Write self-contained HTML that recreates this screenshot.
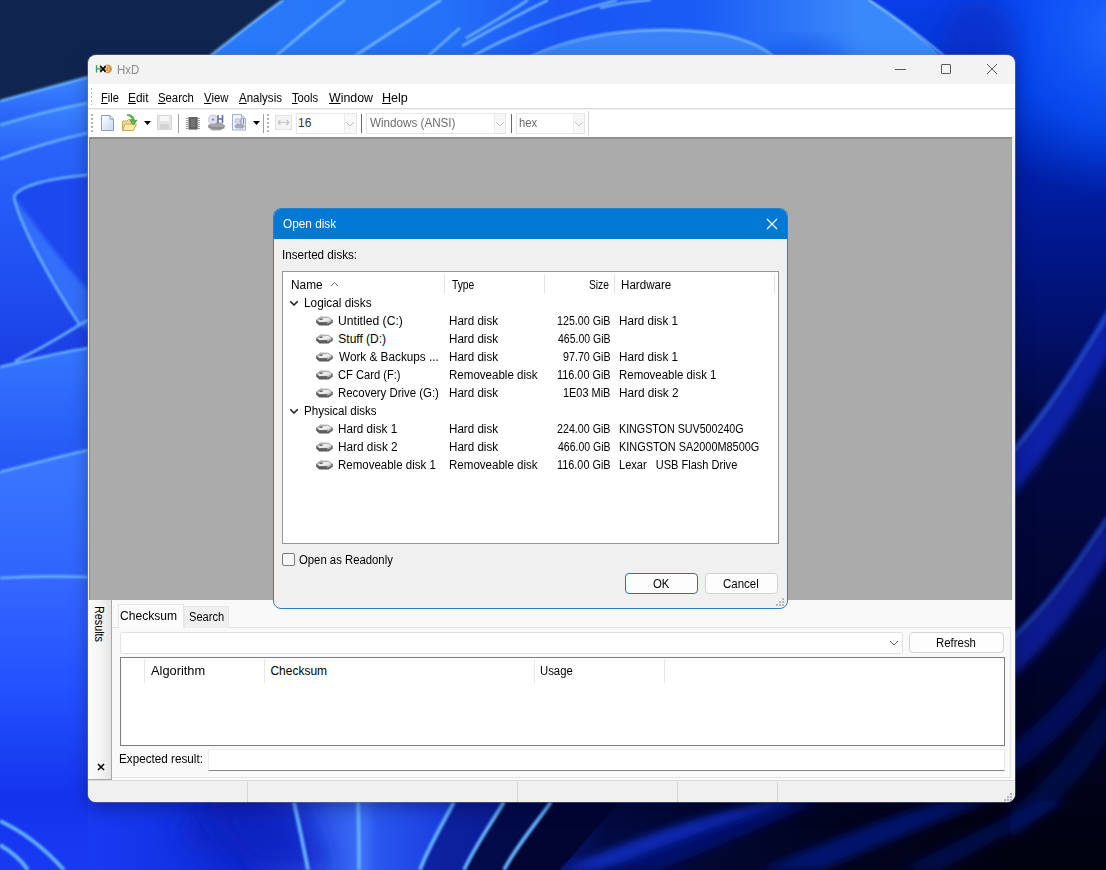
<!DOCTYPE html>
<html><head><meta charset="utf-8">
<style>
*{box-sizing:border-box;margin:0;padding:0}
html,body{width:1106px;height:870px;overflow:hidden}
body{position:relative;font-family:"Liberation Sans",sans-serif;font-size:12px;color:#000;background:#1a3fd0}
.a{position:absolute}
.t{position:absolute;white-space:nowrap;line-height:14px;font-size:12px}
.u{text-decoration:underline;text-decoration-thickness:1px;text-underline-offset:1px}
</style></head><body>
<svg width="0" height="0" style="position:absolute"><defs>
<linearGradient id="hg" x1="0" y1="0" x2="1" y2="1"><stop offset="0" stop-color="#b8b8b8"/><stop offset=".5" stop-color="#f0f0f0"/><stop offset="1" stop-color="#c0c0c0"/></linearGradient>
<symbol id="hdd" viewBox="0 0 17 10"><path d="M0.5 4.2 L4.5 1 L12.5 1.3 L16.5 4.3 L12.5 6.6 L3.5 6.6 Z" fill="url(#hg)" stroke="#7a7a7a" stroke-width=".7"/><path d="M0.5 4.2 L3.5 6.6 H12.5 L16.5 4.3 V6.6 L12.5 9.2 H3.5 L0.5 6.8 Z" fill="#5e5e5e" stroke="#555" stroke-width=".5"/><rect x="3.5" y="2.4" width="3" height="1.6" fill="#6a6a6a"/><path d="M11 7.3 L15.5 5.4" stroke="#c8c8c8" stroke-width=".9"/></symbol>
</defs></svg>
<svg class="a" style="left:0;top:0" width="1106" height="870" viewBox="0 0 1106 870">
<defs>
 <filter id="b1" x="-20%" y="-20%" width="140%" height="140%"><feGaussianBlur stdDeviation="0.9"/></filter>
 <filter id="b2" x="-20%" y="-20%" width="140%" height="140%"><feGaussianBlur stdDeviation="2"/></filter>
 <filter id="b3" x="-30%" y="-30%" width="160%" height="160%"><feGaussianBlur stdDeviation="4"/></filter>
 <filter id="b8" x="-50%" y="-50%" width="200%" height="200%"><feGaussianBlur stdDeviation="12"/></filter>
 <linearGradient id="gright" x1="0" y1="0" x2="0" y2="870" gradientUnits="userSpaceOnUse">
  <stop offset="0" stop-color="#0a3ee8"/><stop offset=".1" stop-color="#0034d0"/><stop offset=".2" stop-color="#0020a8"/><stop offset=".27" stop-color="#001890"/><stop offset=".38" stop-color="#02106a"/><stop offset=".48" stop-color="#020a44"/><stop offset=".7" stop-color="#010530"/><stop offset="1" stop-color="#00020e"/>
 </linearGradient>
 <radialGradient id="grtop" cx="1120" cy="30" r="170" gradientUnits="userSpaceOnUse">
  <stop offset="0" stop-color="#2068ff" stop-opacity="1"/><stop offset=".6" stop-color="#0a50f8" stop-opacity=".7"/><stop offset="1" stop-color="#0040e0" stop-opacity="0"/>
 </radialGradient>
 <linearGradient id="gleft" x1="0" y1="0" x2="0" y2="870" gradientUnits="userSpaceOnUse">
  <stop offset="0" stop-color="#2e6cf8"/><stop offset=".45" stop-color="#2c68fa"/><stop offset=".6" stop-color="#3468ff"/><stop offset=".72" stop-color="#2050ff"/><stop offset=".9" stop-color="#1a40f5"/><stop offset="1" stop-color="#1a3ff0"/>
 </linearGradient>
 <linearGradient id="gbot" x1="0" y1="0" x2="1106" y2="0" gradientUnits="userSpaceOnUse">
  <stop offset="0" stop-color="#183af2"/><stop offset=".08" stop-color="#183af2"/><stop offset=".16" stop-color="#1232e4"/><stop offset=".22" stop-color="#1028d0"/><stop offset=".26" stop-color="#2040e0"/><stop offset=".33" stop-color="#3a6ef8"/><stop offset=".34" stop-color="#2a58f0"/><stop offset=".4" stop-color="#1a3ee0"/><stop offset=".47" stop-color="#0a1e9a"/><stop offset=".55" stop-color="#020a40"/><stop offset=".75" stop-color="#010420"/><stop offset="1" stop-color="#00010a"/>
 </linearGradient>
 <linearGradient id="gpet" x1="205" y1="0" x2="944" y2="0" gradientUnits="userSpaceOnUse">
  <stop offset="0" stop-color="#2a7cfa"/><stop offset=".33" stop-color="#2470f8"/><stop offset=".48" stop-color="#1a56f4"/><stop offset=".67" stop-color="#1a5cf5"/><stop offset=".88" stop-color="#3a88fa"/><stop offset="1" stop-color="#3a8afa"/>
 </linearGradient>
 <linearGradient id="gtr" x1="944" y1="0" x2="1106" y2="0" gradientUnits="userSpaceOnUse">
  <stop offset="0" stop-color="#0828b8"/><stop offset=".35" stop-color="#0a3ad8"/><stop offset=".7" stop-color="#0c58ff"/><stop offset="1" stop-color="#2068ff"/>
 </linearGradient>
</defs>
<rect width="1106" height="870" fill="url(#gleft)"/>
<!-- bottom band -->
<rect x="88" y="801" width="1018" height="69" fill="url(#gbot)"/>
<ellipse cx="230" cy="830" rx="50" ry="25" fill="#0a20b8" filter="url(#b8)" opacity=".6"/>
<!-- right band -->
<path d="M860 0 L1106 0 L1106 870 L1005 870 L1005 60 L940 60 Z" fill="url(#gright)"/>
<rect x="940" y="0" width="166" height="280" fill="url(#grtop)"/>
<ellipse cx="980" cy="45" rx="40" ry="45" fill="#0a2cc0" filter="url(#b8)" opacity=".6"/>
<!-- top right deep blue -->

<!-- top bright petal -->
<path d="M283 0 L870 0 C900 20 925 40 944 60 L205 60 C240 30 262 15 283 0 Z" fill="url(#gpet)"/>
<path d="M345 0 L441 0 C410 20 385 36 355 60 L276 60 C300 36 320 18 345 0 Z" fill="#2a7af8" opacity=".6"/>
<ellipse cx="805" cy="56" rx="40" ry="12" fill="#1048e8" filter="url(#b8)" opacity=".6"/>
<path d="M528 60 C580 32 650 24 720 34 C750 40 765 48 775 60 Z" fill="#3a82f8"/>

<!-- top navy -->
<path d="M0 0 L283 0 C262 15 238 34 205 60 L88 77 L0 101 Z" fill="#0f2550"/>
<!-- highlight lines top -->
<g fill="none" stroke="#84c4ff" stroke-width="2.2" filter="url(#b1)" opacity=".9">
 <path d="M283 0 C262 15 238 34 210 56"/>
 <path d="M345 0 C320 18 300 36 276 56"/>
 <path d="M441 0 C410 20 385 36 355 56"/>
 <path d="M466 38 C490 24 510 12 528 0"/>
 <path d="M462 46 C490 30 520 14 548 0"/>
 <path d="M473 56 C520 30 570 12 617 0"/>
 <path d="M528 58 C580 32 650 24 720 34 C750 40 765 48 775 58"/>
 <path d="M600 8 C615 4 635 1 651 0"/>
 <path d="M869 0 C900 20 925 40 944 56"/>
 <path d="M460 28 C450 36 440 46 428 56"/>
</g>
<!-- left band -->
<linearGradient id="lp1" x1="0" y1="0" x2="0" y2="1"><stop offset="0" stop-color="#3c84ff"/><stop offset="1" stop-color="#2660f6"/></linearGradient>
<linearGradient id="lp4" x1="0" y1="0" x2="0" y2="1"><stop offset="0" stop-color="#2a66fa"/><stop offset=".6" stop-color="#2050f2"/><stop offset="1" stop-color="#1a3ee4"/></linearGradient>
<linearGradient id="lp5" x1="0" y1="0" x2="0" y2="1"><stop offset="0" stop-color="#3476ff"/><stop offset="1" stop-color="#2456f4"/></linearGradient>
<linearGradient id="lp6" x1="0" y1="0" x2="0" y2="1"><stop offset="0" stop-color="#3a78ff"/><stop offset="1" stop-color="#3064fc"/></linearGradient>
<linearGradient id="lp7" x1="0" y1="0" x2="0" y2="1"><stop offset="0" stop-color="#3468ff"/><stop offset=".4" stop-color="#2250ff"/><stop offset=".75" stop-color="#1434ec"/><stop offset="1" stop-color="#183af2"/></linearGradient>
<path d="M0 101 L88 77 L88 103 C60 108 30 116 0 125 Z" fill="url(#lp1)"/>
<path d="M0 125 C30 116 60 108 88 103 L88 133 C60 139 30 148 0 159 Z" fill="url(#lp1)"/>
<path d="M0 159 C30 148 60 139 88 133 L88 348 C60 352 30 360 0 367 Z" fill="url(#lp4)"/>
<path d="M88 175 C50 178 18 186 14 197 C20 225 50 280 80 325 L88 330 Z" fill="#1c48f0"/>
<path d="M14 197 C20 225 50 280 80 325 L88 330 L88 290 C60 260 35 225 14 197 Z" fill="#3a7cff" opacity=".75" filter="url(#b2)"/>
<path d="M0 367 C30 360 60 352 88 348 L88 450 C60 456 30 465 0 472 Z" fill="url(#lp5)"/>
<path d="M0 472 C30 465 60 456 88 450 L88 577 C60 576 30 576 0 578 Z" fill="url(#lp6)"/>
<path d="M0 578 C30 576 60 576 88 577 L88 870 L0 870 Z" fill="url(#lp7)"/>
<g fill="none" stroke="#6cb4ff" stroke-width="2.6" filter="url(#b1)" opacity=".95">
 <path d="M0 101 L88 77"/>
 <path d="M0 125 C30 116 60 108 88 103"/>
 <path d="M0 159 C30 148 60 139 88 133"/>
 <path d="M88 175 C50 178 18 186 14 197 C20 225 50 280 80 325"/>
 <path d="M88 320 C70 330 50 345 15 361"/>
 <path d="M0 367 C30 360 60 352 88 348"/>
 <path d="M0 472 C30 465 60 456 88 450"/>
 <path d="M0 578 C30 576 60 576 88 577"/>
</g>
<!-- bottom band details -->
<path d="M200 801 L300 801 L330 870 L250 870 Z" fill="#0a22c0" filter="url(#b8)" opacity=".8"/>
<path d="M455 801 L505 801 C490 825 474 848 464 870 L420 870 C428 848 442 825 455 801 Z" fill="#0a1a90" opacity=".8"/>
<path d="M505 801 L552 801 C535 825 515 848 504 870 L464 870 C474 848 490 825 505 801 Z" fill="#020a48"/>
<path d="M552 801 L620 801 L560 870 L504 870 C515 848 535 825 552 801 Z" fill="#010530"/>
<g fill="none" stroke="#62b0ff" stroke-width="3.8" filter="url(#b1)">
 <path d="M0 821 C24 832 46 850 64 870"/>
 <path d="M0 845 C12 852 22 861 28 870"/>
 <path d="M294 802 C299 825 304 848 308 870"/>
 <path d="M358 802 C359 825 359 848 359 870"/>
 <path d="M454 802 C442 825 428 848 420 870"/>
 <path d="M504 802 C490 825 474 848 464 870"/>
 <path d="M551 802 C535 825 515 848 504 870"/>
</g>
<!-- bottom ribbons -->
<g filter="url(#b3)">
 <path d="M560 870 L600 870 C680 840 740 815 800 801 L770 801 C700 815 630 840 560 870 Z" fill="#1030c8" opacity=".85"/>
 <path d="M600 870 L660 870 C720 845 780 820 820 801 L800 801 C740 815 680 840 600 870 Z" fill="#061690" opacity=".6"/>
 <path d="M760 870 L820 870 C880 845 940 820 990 801 L940 801 C880 820 820 845 760 870 Z" fill="#0a1ea0" opacity=".6"/>
 <path d="M900 870 L940 870 C990 845 1030 820 1070 801 L1040 801 C1000 820 950 845 900 870 Z" fill="#061488" opacity=".45"/>
</g>
<!-- ribbons -->
<g filter="url(#b3)">
 <path d="M1110 310 C1075 370 1045 415 1010 455 L1010 500 C1050 450 1085 400 1110 350 Z" fill="#0a28c0" opacity=".8"/>
 <path d="M1110 515 C1080 560 1050 605 1010 640 L1010 680 C1055 640 1085 595 1110 555 Z" fill="#0a24b0" opacity=".75"/>
 <path d="M1110 640 C1080 680 1050 715 1010 745 L1010 775 C1055 745 1085 710 1110 675 Z" fill="#08188a" opacity=".5"/>
 <path d="M1110 700 C1080 740 1050 780 1010 810 L1010 840 C1055 810 1085 775 1110 735 Z" fill="#061480" opacity=".4"/>
</g>
<g fill="none" stroke="#3a6cff" stroke-width="2.5" filter="url(#b2)">
 <path d="M1110 310 C1075 370 1045 415 1010 455"/>
 <path d="M1110 515 C1080 560 1050 605 1010 640" opacity=".8"/>
</g>
</svg>

<div class="a" style="left:88px;top:55px;width:927px;height:747px;border-radius:8px;background:#f3f3f3;overflow:hidden;box-shadow:0 0 0 1px rgba(120,130,150,.45),0 6px 18px rgba(0,0,40,.35)">
<svg class="a" style="left:7px;top:8px" width="18" height="12" viewBox="0 0 18 12">
 <path d="M1.5 2 V9.5 M5.5 2 V9.5 M1.5 5.8 H5.5" stroke="#3f9a62" stroke-width="1.3" fill="none"/>
 <circle cx="12.6" cy="5.8" r="4.4" fill="#d29444"/>
 <path d="M11 3 V8.6 H12.2 C14.6 8.6 14.6 3 12.2 3 Z" fill="none" stroke="#f3d69a" stroke-width="1"/>
 <path d="M5.5 3.2 L10.5 8.6 M10.5 3.2 L5.5 8.6" stroke="#000" stroke-width="1.6"/>
</svg>
<div class="t" style="left:28.95px;top:8.00px;transform:scaleX(0.9500);transform-origin:0 0;color:#8a8a8a">HxD</div>
<div class="a" style="left:807px;top:14px;width:11px;height:1px;background:#5c5c5c"></div>
<div class="a" style="left:853px;top:9px;width:10px;height:10px;border:1px solid #5c5c5c;border-radius:1px"></div>
<svg class="a" style="left:898px;top:8px" width="12" height="12" viewBox="0 0 12 12"><path d="M1 1 L11 11 M11 1 L1 11" stroke="#5c5c5c" stroke-width="1"/></svg>
<div class="a" style="left:0px;top:29px;width:927px;height:25px;background:#fff;border-bottom:1px solid #dadada"></div>
<div class="a" style="left:3px;top:33px;width:1px;height:17px;background-image:linear-gradient(#b0b0b0 50%,transparent 50%);background-size:1px 4px"></div>
<div class="t" style="left:12.58px;top:36.00px;transform:scaleX(0.9222);transform-origin:0 0"><span class="u">F</span>ile</div>
<div class="t" style="left:40.41px;top:36.00px;transform:scaleX(0.9900);transform-origin:0 0"><span class="u">E</span>dit</div>
<div class="t" style="left:70.46px;top:36.00px;transform:scaleX(0.9444);transform-origin:0 0"><span class="u">S</span>earch</div>
<div class="t" style="left:116.20px;top:36.00px;transform:scaleX(0.9462);transform-origin:0 0"><span class="u">V</span>iew</div>
<div class="t" style="left:151.10px;top:36.00px;transform:scaleX(0.9614);transform-origin:0 0"><span class="u">A</span>nalysis</div>
<div class="t" style="left:204.30px;top:36.00px;transform:scaleX(0.9286);transform-origin:0 0"><span class="u">T</span>ools</div>
<div class="t" style="left:241.00px;top:36.00px;transform:scaleX(1.0302);transform-origin:0 0"><span class="u">W</span>indow</div>
<div class="t" style="left:294.05px;top:36.00px;transform:scaleX(1.0478);transform-origin:0 0"><span class="u">H</span>elp</div>
<div class="a" style="left:0px;top:55px;width:927px;height:27px;background:#fff"></div>
<div class="a" style="left:3px;top:59px;width:2px;height:19px;background-image:linear-gradient(#b4b4b4 50%,transparent 50%);background-size:2px 4px"></div>
<svg class="a" style="left:12px;top:59px" width="16" height="18" viewBox="0 0 16 18">
 <defs><linearGradient id="gdoc" x1="0" y1="0" x2="1" y2="1"><stop offset="0" stop-color="#ffffff"/><stop offset="1" stop-color="#c4d8f0"/></linearGradient></defs>
 <path d="M1.5 1.5 H10 L13.5 5 V16.5 H1.5 Z" fill="url(#gdoc)" stroke="#8c9cc0" stroke-width="1"/>
 <path d="M10 1.5 V5 H13.5" fill="#dfe8f5" stroke="#8c9cc0" stroke-width="1"/>
</svg>
<svg class="a" style="left:33px;top:58px" width="18" height="19" viewBox="0 0 18 19">
 <path d="M1.5 8 H6 L7.5 6.5 H12 V17.5 H1.5 Z" fill="#f3dc8c" stroke="#c8a850" stroke-width="1"/>
 <path d="M1.5 17.5 L4 11 H15.5 L12.5 17.5 Z" fill="#fbe9a8" stroke="#c8a850" stroke-width="1"/>
 <path d="M6 2 C10 1 13 3 13.5 8 L16 7 L12.5 12 L9 7.5 L11.5 8 C11 4.5 9 3 6 2 Z" fill="#5cc050" stroke="#3a9a38" stroke-width=".8"/>
</svg>
<svg class="a" style="left:56px;top:66px" width="8" height="5" viewBox="0 0 8 5"><path d="M0 0 H7 L3.5 4 Z" fill="#000"/></svg>
<svg class="a" style="left:68px;top:59px" width="17" height="17" viewBox="0 0 17 17">
 <path d="M1.5 1.5 H15.5 V15.5 H1.5 Z" fill="#e4e4e4" stroke="#d4d4d4" stroke-width="1"/>
 <rect x="4" y="2" width="9" height="5" fill="#f6f6f6"/>
 <rect x="4" y="10" width="9" height="5" fill="#d2d2d2"/>
</svg>
<div class="a" style="left:90px;top:59px;width:1px;height:19px;background:#a0a0a0"></div>
<svg class="a" style="left:98px;top:62px" width="14" height="14" viewBox="0 0 14 14">
 <rect x="2.5" y="0" width="9.2" height="12.6" fill="#626262"/>
 <rect x="5" y="2" width="4" height="8" fill="#747474"/>
 <g fill="#9a9a9a"><rect x="0" y="1" width="2" height="1"/><rect x="0" y="3" width="2" height="1"/><rect x="0" y="5" width="2" height="1"/><rect x="0" y="7" width="2" height="1"/><rect x="0" y="9" width="2" height="1"/><rect x="0" y="11" width="2" height="1"/>
 <rect x="12" y="1" width="2" height="1"/><rect x="12" y="3" width="2" height="1"/><rect x="12" y="5" width="2" height="1"/><rect x="12" y="7" width="2" height="1"/><rect x="12" y="9" width="2" height="1"/><rect x="12" y="11" width="2" height="1"/></g>
</svg>
<svg class="a" style="left:120px;top:59px" width="17" height="17" viewBox="0 0 17 17">
 <path d="M0.5 11.5 L4 9 H13 L16.5 11.5 V13 L12.5 16 H4 L0.5 13.5 Z" fill="#a6a6a6" stroke="#8a8a8a" stroke-width=".6"/>
 <path d="M0.5 11.5 L4 14 H16.5" stroke="#6e6e6e" stroke-width=".8" fill="none"/>
 <circle cx="5" cy="5.5" r="4.6" fill="#e2e0f2" stroke="#b0aed0" stroke-width=".6"/>
 <circle cx="5" cy="5.5" r="1.2" fill="#8c8ab8"/>
 <path d="M10 1 V9 M14.5 1 V9 M10 5 H14.5" stroke="#6a68a8" stroke-width="1.6"/>
</svg>
<svg class="a" style="left:144px;top:59px" width="15" height="17" viewBox="0 0 15 17">
 <path d="M0.5 0.5 H9.5 L13.5 4.5 V16 H0.5 Z" fill="#eef3fa" stroke="#9fb0d0" stroke-width="1"/>
 <path d="M9.5 0.5 V4.5 H13.5" fill="#c8d4ea" stroke="#9fb0d0" stroke-width=".8"/>
 <path d="M2.5 11.5 L4.5 10 H11 L12.5 11.5 V13 L11 14.5 H4.5 L2.5 13 Z" fill="#a8a6c0"/>
 <circle cx="5.5" cy="7" r="2.6" fill="#d8d6ea" stroke="#a8a6c8" stroke-width=".5"/>
 <path d="M9 4.5 V10 M11.5 4.5 V10" stroke="#8886b8" stroke-width="1.2"/>
</svg>
<svg class="a" style="left:165px;top:66px" width="8" height="5" viewBox="0 0 8 5"><path d="M0 0 H7 L3.5 4 Z" fill="#000"/></svg>
<div class="a" style="left:175px;top:59px;width:1px;height:19px;background:#a0a0a0"></div>
<div class="a" style="left:179px;top:59px;width:2px;height:19px;background-image:linear-gradient(#b4b4b4 50%,transparent 50%);background-size:2px 4px"></div>
<svg class="a" style="left:187px;top:60px" width="17" height="15" viewBox="0 0 17 15">
 <rect x=".5" y=".5" width="16" height="14" fill="#f4f4f4" stroke="#e2e2e2"/>
 <path d="M3 7.5 H14 M3 7.5 L5.5 5 M3 7.5 L5.5 10 M14 7.5 L11.5 5 M14 7.5 L11.5 10" stroke="#c4c4c4" stroke-width="1.2" fill="none"/>
</svg>
<div class="a" style="left:208px;top:58px;width:61px;height:21px;background:#fff;border:1px solid #e6e6e6"></div>
<div class="a" style="left:256px;top:59px;width:12px;height:19px;background:#f7f7f7;border-left:1px solid #ececec"></div>
<svg class="a" style="left:257px;top:66px" width="10" height="6" viewBox="0 0 10 6"><path d="M1 1 L5 5 L9 1" stroke="#c0c0c0" fill="none"/></svg>
<div class="a" style="left:273px;top:59px;width:1px;height:19px;background:#6a6a6a"></div>
<div class="a" style="left:278px;top:58px;width:140px;height:21px;background:#fff;border:1px solid #e6e6e6"></div>
<div class="a" style="left:406px;top:59px;width:11px;height:19px;background:#f7f7f7;border-left:1px solid #ececec"></div>
<svg class="a" style="left:407px;top:66px" width="10" height="6" viewBox="0 0 10 6"><path d="M1 1 L5 5 L9 1" stroke="#c0c0c0" fill="none"/></svg>
<div class="a" style="left:423px;top:59px;width:1px;height:19px;background:#6a6a6a"></div>
<div class="a" style="left:428px;top:58px;width:69px;height:21px;background:#fff;border:1px solid #e6e6e6"></div>
<div class="a" style="left:485px;top:59px;width:11px;height:19px;background:#f7f7f7;border-left:1px solid #ececec"></div>
<svg class="a" style="left:486px;top:66px" width="10" height="6" viewBox="0 0 10 6"><path d="M1 1 L5 5 L9 1" stroke="#c0c0c0" fill="none"/></svg>
<div class="a" style="left:500px;top:56px;width:1px;height:25px;background:#d8d8d8"></div><div class="t" style="left:210.00px;top:61.00px;color:#333">16</div><div class="t" style="left:281.50px;top:61.00px;transform:scaleX(0.9713);transform-origin:0 0;color:#6d6d6d">Windows (ANSI)</div><div class="t" style="left:431.06px;top:61.00px;transform:scaleX(0.9444);transform-origin:0 0;color:#6d6d6d">hex</div>
<div class="a" style="left:1px;top:82px;width:923px;height:463px;background:#ababab;border-top:2px solid #8e8e8e;border-left:1px solid #8e8e8e;border-right:1px solid #a2a2a2"></div>
<div class="a" style="left:0px;top:545px;width:927px;height:180px;background:#f9f9f9"></div>
<div class="a" style="left:0px;top:545px;width:24px;height:180px;background:linear-gradient(90deg,#fbfbfb 0%,#f4f4f4 55%,#e4e4e4 100%);border-right:1px solid #a8a8a8;border-bottom:1px solid #a8a8a8"></div>
<div class="t" style="left:-9px;top:562px;transform:rotate(90deg) scaleX(0.9);transform-origin:center;width:40px;text-align:center">Results</div>
<svg class="a" style="left:9px;top:708px" width="8" height="8" viewBox="0 0 8 8"><path d="M1 1 L7 7 M7 1 L1 7" stroke="#000" stroke-width="1.5"/></svg>
<div class="a" style="left:24px;top:572px;width:899px;height:151px;border:1px solid #e2e2e2;border-left:none;background:#f9f9f9"></div>
<div class="a" style="left:96px;top:551px;width:45px;height:22px;background:#f0f0f0;border:1px solid #e6e6e6;border-bottom:none"></div>
<div class="a" style="left:30px;top:549px;width:66px;height:24px;background:#fbfbfb;border:1px solid #e6e6e6;border-bottom:none"></div>
<div class="t" style="left:32.39px;top:553.50px;transform:scaleX(1.0055);transform-origin:0 0">Checksum</div>
<div class="t" style="left:100.88px;top:555.00px;transform:scaleX(0.9250);transform-origin:0 0">Search</div>
<div class="a" style="left:32px;top:577px;width:783px;height:22px;background:#fff;border:1px solid #e3e3e3;border-radius:2px"></div>
<svg class="a" style="left:801px;top:585px" width="10" height="7" viewBox="0 0 10 7"><path d="M1 1 L5 5 L9 1" stroke="#5a5a5a" fill="none"/></svg>
<div class="a" style="left:821px;top:577px;width:95px;height:21px;background:#fdfdfd;border:1px solid #d4d4d4;border-radius:4px"></div>
<div class="t" style="left:848.45px;top:581.30px;transform:scaleX(0.9500);transform-origin:0 0">Refresh</div>
<div class="a" style="left:32px;top:602px;width:885px;height:89px;background:#fff;border:1px solid #7c7c7c"></div>
<div class="a" style="left:56px;top:604px;width:1px;height:24px;background:#e8e8e8"></div>
<div class="a" style="left:176px;top:604px;width:1px;height:24px;background:#e8e8e8"></div>
<div class="a" style="left:446px;top:604px;width:1px;height:24px;background:#e8e8e8"></div>
<div class="a" style="left:576px;top:604px;width:1px;height:24px;background:#e8e8e8"></div>
<div class="t" style="left:63.00px;top:608.50px;transform:scaleX(1.0680);transform-origin:0 0">Algorithm</div>
<div class="t" style="left:182.40px;top:608.50px">Checksum</div>
<div class="t" style="left:452.05px;top:608.50px;transform:scaleX(0.9455);transform-origin:0 0">Usage</div>
<div class="t" style="left:30.52px;top:697.00px;transform:scaleX(0.9750);transform-origin:0 0">Expected result:</div>
<div class="a" style="left:120px;top:694px;width:797px;height:22px;background:#fff;border:1px solid #ececec;border-bottom:1px solid #868686"></div>
<div class="a" style="left:0px;top:725px;width:927px;height:22px;background:#f0f0f0;border-top:1px solid #d9d9d9"></div>
<div class="a" style="left:159px;top:727px;width:1px;height:20px;background:#d5d5d5"></div>
<div class="a" style="left:429px;top:727px;width:1px;height:20px;background:#d5d5d5"></div>
<div class="a" style="left:589px;top:727px;width:1px;height:20px;background:#d5d5d5"></div>
<div class="a" style="left:689px;top:727px;width:1px;height:20px;background:#d5d5d5"></div>
<svg class="a" style="left:915px;top:737px" width="10" height="10" viewBox="0 0 10 10"><g fill="#b4b4b4"><rect x="7" y="1" width="2" height="2"/><rect x="4" y="4" width="2" height="2"/><rect x="7" y="4" width="2" height="2"/><rect x="1" y="7" width="2" height="2"/><rect x="4" y="7" width="2" height="2"/><rect x="7" y="7" width="2" height="2"/></g></svg>
</div>
<div class="a" style="left:273px;top:208px;width:515px;height:401px;border:1px solid #2d7fc4;border-radius:8px;background:#f0f0f0;overflow:hidden">
<div class="a" style="left:0;top:0;width:513px;height:30px;background:#0078d4"></div>
<div class="t" style="left:9.00px;top:8.30px;transform:scaleX(0.9833);transform-origin:0 0;color:#fff">Open disk</div>
<svg class="a" style="left:492px;top:9px" width="12" height="12" viewBox="0 0 12 12"><path d="M1 1 L11 11 M11 1 L1 11" stroke="#fff" stroke-width="1.2"/></svg>
<div class="t" style="left:7.83px;top:39.00px;transform:scaleX(0.9707);transform-origin:0 0">Inserted disks:</div>
<div class="a" style="left:8px;top:62px;width:497px;height:273px;background:#fff;border:1px solid #979797"></div>
<div class="t" style="left:16.61px;top:68.60px;transform:scaleX(0.9871);transform-origin:0 0">Name</div>
<svg class="a" style="left:56px;top:72px" width="9" height="6" viewBox="0 0 9 6"><path d="M1 5 L4.5 1.5 L8 5" stroke="#6a6a6a" fill="none"/></svg>
<div class="a" style="left:170px;top:66px;width:1px;height:18px;background:#e5e5e5"></div>
<div class="a" style="left:270px;top:66px;width:1px;height:18px;background:#e5e5e5"></div>
<div class="a" style="left:340px;top:66px;width:1px;height:18px;background:#e5e5e5"></div>
<div class="a" style="left:500px;top:66px;width:1px;height:18px;background:#e5e5e5"></div>
<div class="t" style="left:178.00px;top:68.60px;transform:scaleX(0.8577);transform-origin:0 0">Type</div>
<div class="t" style="left:314.65px;top:68.60px;transform:scaleX(0.8545);transform-origin:0 0">Size</div>
<div class="t" style="left:346.73px;top:68.60px;transform:scaleX(0.9667);transform-origin:0 0">Hardware</div>
<svg class="a" style="left:15px;top:91px" width="10" height="7" viewBox="0 0 10 7"><path d="M1.2 1.2 L5 5 L8.8 1.2" stroke="#1a1a1a" stroke-width="1.5" fill="none"/></svg>
<div class="t" style="left:30.32px;top:87.00px;transform:scaleX(0.9836);transform-origin:0 0">Logical disks</div>
<svg class="a" style="left:42px;top:107px" width="17" height="10" viewBox="0 0 17 10"><use href="#hdd"/></svg>
<div class="t" style="left:64.29px;top:105.00px;transform:scaleX(1.0129);transform-origin:0 0">Untitled (C:)</div>
<div class="t" style="left:174.53px;top:105.00px;transform:scaleX(0.9680);transform-origin:0 0">Hard disk</div>
<div class="t" style="left:282.71px;top:105.00px;transform:scaleX(0.8898);transform-origin:0 0">125.00 GiB</div>
<div class="t" style="left:344.63px;top:105.00px;transform:scaleX(0.9712);transform-origin:0 0">Hard disk 1</div>
<svg class="a" style="left:42px;top:125px" width="17" height="10" viewBox="0 0 17 10"><use href="#hdd"/></svg>
<div class="t" style="left:64.30px;top:123.00px">Stuff (D:)</div>
<div class="t" style="left:174.53px;top:123.00px;transform:scaleX(0.9680);transform-origin:0 0">Hard disk</div>
<div class="t" style="left:283.60px;top:123.00px;transform:scaleX(0.8750);transform-origin:0 0">465.00 GiB</div>
<svg class="a" style="left:42px;top:143px" width="17" height="10" viewBox="0 0 17 10"><use href="#hdd"/></svg>
<div class="t" style="left:65.30px;top:141.00px;transform:scaleX(0.9802);transform-origin:0 0">Work &amp; Backups ...</div>
<div class="t" style="left:174.53px;top:141.00px;transform:scaleX(0.9680);transform-origin:0 0">Hard disk</div>
<div class="t" style="left:288.81px;top:141.00px;transform:scaleX(0.8923);transform-origin:0 0">97.70 GiB</div>
<div class="t" style="left:344.63px;top:141.00px;transform:scaleX(0.9712);transform-origin:0 0">Hard disk 1</div>
<svg class="a" style="left:42px;top:161px" width="17" height="10" viewBox="0 0 17 10"><use href="#hdd"/></svg>
<div class="t" style="left:64.37px;top:159.00px;transform:scaleX(0.9288);transform-origin:0 0">CF Card (F:)</div>
<div class="t" style="left:174.54px;top:159.00px;transform:scaleX(0.9626);transform-origin:0 0">Removeable disk</div>
<div class="t" style="left:282.69px;top:159.00px;transform:scaleX(0.9052);transform-origin:0 0">116.00 GiB</div>
<div class="t" style="left:344.65px;top:159.00px;transform:scaleX(0.9545);transform-origin:0 0">Removeable disk 1</div>
<svg class="a" style="left:42px;top:179px" width="17" height="10" viewBox="0 0 17 10"><use href="#hdd"/></svg>
<div class="t" style="left:64.35px;top:177.00px;transform:scaleX(0.9519);transform-origin:0 0">Recovery Drive (G:)</div>
<div class="t" style="left:174.53px;top:177.00px;transform:scaleX(0.9680);transform-origin:0 0">Hard disk</div>
<div class="t" style="left:288.79px;top:177.00px;transform:scaleX(0.9098);transform-origin:0 0">1E03 MiB</div>
<div class="t" style="left:344.62px;top:177.00px;transform:scaleX(0.9814);transform-origin:0 0">Hard disk 2</div>
<svg class="a" style="left:15px;top:199px" width="10" height="7" viewBox="0 0 10 7"><path d="M1.2 1.2 L5 5 L8.8 1.2" stroke="#1a1a1a" stroke-width="1.5" fill="none"/></svg>
<div class="t" style="left:30.34px;top:195.00px;transform:scaleX(0.9635);transform-origin:0 0">Physical disks</div>
<svg class="a" style="left:42px;top:215px" width="17" height="10" viewBox="0 0 17 10"><use href="#hdd"/></svg>
<div class="t" style="left:64.33px;top:213.00px;transform:scaleX(0.9746);transform-origin:0 0">Hard disk 1</div>
<div class="t" style="left:174.53px;top:213.00px;transform:scaleX(0.9680);transform-origin:0 0">Hard disk</div>
<div class="t" style="left:282.71px;top:213.00px;transform:scaleX(0.8898);transform-origin:0 0">224.00 GiB</div>
<div class="t" style="left:344.71px;top:213.00px;transform:scaleX(0.8913);transform-origin:0 0">KINGSTON SUV500240G</div>
<svg class="a" style="left:42px;top:233px" width="17" height="10" viewBox="0 0 17 10"><use href="#hdd"/></svg>
<div class="t" style="left:64.32px;top:231.00px;transform:scaleX(0.9831);transform-origin:0 0">Hard disk 2</div>
<div class="t" style="left:174.53px;top:231.00px;transform:scaleX(0.9680);transform-origin:0 0">Hard disk</div>
<div class="t" style="left:283.60px;top:231.00px;transform:scaleX(0.8750);transform-origin:0 0">466.00 GiB</div>
<div class="t" style="left:344.69px;top:231.00px;transform:scaleX(0.9078);transform-origin:0 0">KINGSTON SA2000M8500G</div>
<svg class="a" style="left:42px;top:251px" width="17" height="10" viewBox="0 0 17 10"><use href="#hdd"/></svg>
<div class="t" style="left:64.34px;top:249.00px;transform:scaleX(0.9584);transform-origin:0 0">Removeable disk 1</div>
<div class="t" style="left:174.54px;top:249.00px;transform:scaleX(0.9626);transform-origin:0 0">Removeable disk</div>
<div class="t" style="left:282.69px;top:249.00px;transform:scaleX(0.9052);transform-origin:0 0">116.00 GiB</div>
<div class="t" style="left:344.68px;top:249.00px;transform:scaleX(0.9189);transform-origin:0 0">Lexar&nbsp;&nbsp;&nbsp;USB Flash Drive</div>
<div class="a" style="left:8px;top:344px;width:13px;height:13px;background:#f7f7f7;border:1px solid #7a7a7a;border-radius:2px"></div>
<div class="t" style="left:24.60px;top:344.00px;transform:scaleX(0.9440);transform-origin:0 0">Open as Readonly</div>
<div class="a" style="left:351px;top:364px;width:73px;height:21px;background:#fdfdfd;border:1.5px solid #2f6fb4;border-radius:4px"></div>
<div class="t" style="left:379.40px;top:368.40px;transform:scaleX(0.9471);transform-origin:0 0">OK</div>
<div class="a" style="left:431px;top:364px;width:73px;height:21px;background:#fdfdfd;border:1px solid #d2d2d2;border-radius:4px"></div>
<div class="t" style="left:448.94px;top:368.40px;transform:scaleX(0.9583);transform-origin:0 0">Cancel</div>
<svg class="a" style="left:501px;top:388px" width="10" height="10" viewBox="0 0 10 10"><g fill="#b8b8b8"><rect x="7" y="1" width="2" height="2"/><rect x="4" y="4" width="2" height="2"/><rect x="7" y="4" width="2" height="2"/><rect x="1" y="7" width="2" height="2"/><rect x="4" y="7" width="2" height="2"/><rect x="7" y="7" width="2" height="2"/></g></svg>
</div>
</body></html>
